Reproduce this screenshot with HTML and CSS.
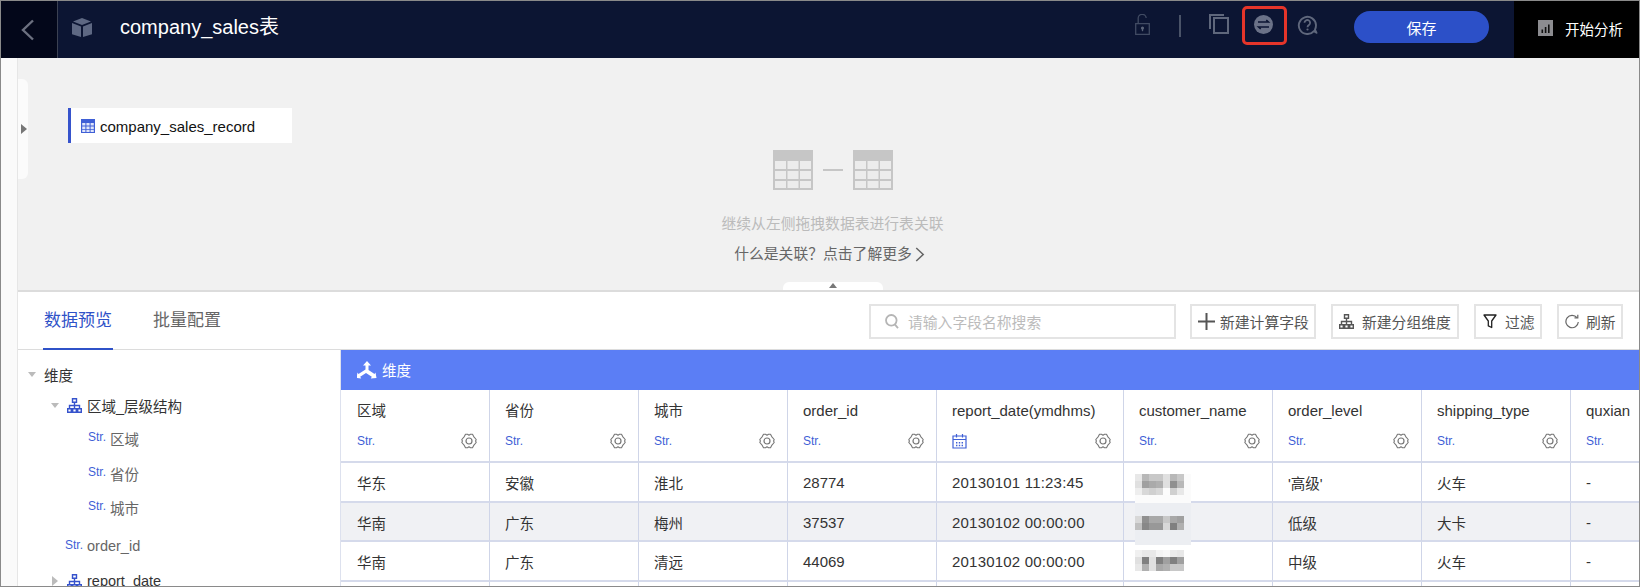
FILE: index.html
```html
<!DOCTYPE html>
<html lang="zh">
<head>
<meta charset="utf-8">
<title>company_sales表</title>
<link rel="stylesheet" href="styles.css">
</head>
<body>
<svg class="defs" aria-hidden="true">
  <symbol id="tree" viewBox="0 0 15 15">
    <path d="M5.500 .7h4v3.600h-4zM.7 10.700h3.600v3.600H.7zM5.700 10.700h3.600v3.600H5.700zM10.700 10.700h3.600v3.600h-3.600zM7.500 4.300v6.400M2.500 10.700V7.500h10v3.200" fill="none" stroke="currentColor" stroke-width="1.400"/>
  </symbol>
  <symbol id="gear" viewBox="0 0 16 16">
    <path d="M4.500 1.200h2L8 2.200l1.500-1h2l1.200 2.400 2.500 2.900-.6 1.500.6 1.500-2.500 2.900-1.200 2.400h-2l-1.500-1-1.500 1h-2l-1.200-2.400L.8 9.500 1.400 8 .8 6.500l2.500-2.900z" fill="none" stroke="#777" stroke-width="1.100" stroke-linejoin="round"/>
    <circle cx="8" cy="8" r="3" fill="none" stroke="#777" stroke-width="1.200"/>
  </symbol>
  <symbol id="minitable" viewBox="0 0 40 40">
    <path d="M0 0h40v40H0z" fill="#c6c6c6"/>
    <path d="M2 11h11v8H2zM14.500 11h11v8h-11zM27 11h11v8H27zM2 21h11v8H2zM14.500 21h11v8h-11zM27 21h11v8H27zM2 31h11v7H2zM14.500 31h11v7h-11zM27 31h11v7H27z" fill="#ececec"/>
  </symbol>
</svg>

<div class="app">
  <header class="topbar">
    <div class="back">
      <svg class="back-ico" viewBox="0 0 14 22"><path d="M12 1.500 2 11l10 9.500" fill="none" stroke="#6c7080" stroke-width="2.400"/></svg>
    </div>
    <svg class="cube" viewBox="0 0 20 19"><path d="M10 0l9 3.600L10 7 1 3.600zM0 5l9 3.500V19l-9-2.800zM20 5l-9 3.500V19l9-2.800z" fill="#5e6883"/></svg>
    <h1 class="title">company_sales表</h1>
    <div class="actions">
      <svg class="ico-lock" viewBox="0 0 15 21"><path d="M.7 9.700h13.600v10.600H.7zM3.200 9.500V4.700a4 4 0 0 1 8-.7" fill="none" stroke="#414b63" stroke-width="1.300"/><circle cx="7.500" cy="14" r="1.600" fill="#5a6378"/><path d="M7.500 14v3.200" stroke="#5a6378" stroke-width="1.300"/></svg>
      <span class="divider"></span>
      <svg class="ico-copy" viewBox="0 0 20 20"><path d="M5 4h14v15H5zM1 15V1h14" fill="none" stroke="#5f677c" stroke-width="2"/></svg>
      <span class="swap-wrap">
        <svg class="ico-swap" viewBox="0 0 19 19"><circle cx="9.500" cy="9.500" r="9.500" fill="#6b7288"/><path d="M4 7h10.500l-2.200-2M15 12H4.500l2.200 2" fill="none" stroke="#0c1533" stroke-width="1.500"/></svg>
        <span class="redbox"></span>
      </span>
      <svg class="ico-help" viewBox="0 0 21 20"><path d="M19.500 17.800l-2.600-1.700A8.600 8.600 0 1 1 19 10c0 2-.3 3.500-1 4.600z" fill="none" stroke="#5f677c" stroke-width="1.900" stroke-linejoin="round"/><path d="M7.500 7.800a2.800 2.800 0 1 1 4.400 2.300c-1 .7-1.400 1-1.400 2.100" fill="none" stroke="#5f677c" stroke-width="1.800"/><circle cx="10.500" cy="14.500" r="1.100" fill="#5f677c"/></svg>
      <button class="save">保存</button>
    </div>
    <div class="analyze">
      <svg class="ico-chart" viewBox="0 0 15 16"><path d="M0 0h15v16H0z" fill="#8c8c90"/><path d="M3.500 9.500h1.600V13H3.500zM6.800 7h1.600v6H6.800zM10 4.500h1.600V13H10z" fill="#111"/></svg>
      <span>开始分析</span>
    </div>
  </header>

  <div class="workspace">
    <aside class="strip"></aside>
    <main class="content">
      <section class="canvas">
        <div class="handle-left"><i class="tri-right"></i></div>
        <div class="table-card">
          <svg class="card-ico" viewBox="0 0 14 14"><path d="M0 0h14v14H0z" fill="#3f5fd6"/><path d="M1.200 4h3.200v2.600H1.200zM5.400 4h3.200v2.600H5.400zM9.600 4h3.200v2.600H9.600zM1.200 7.400h3.200V10H1.200zM5.400 7.400h3.200V10H5.400zM9.600 7.400h3.200V10H9.600zM1.200 10.800h3.200v2.200H1.200zM5.400 10.800h3.200v2.200H5.400zM9.600 10.800h3.200v2.200H9.600z" fill="#dfe5fa"/></svg>
          <span>company_sales_record</span>
        </div>
        <div class="hint">
          <div class="hint-icons">
            <svg class="mini"><use href="#minitable"/></svg>
            <span class="hint-dash"></span>
            <svg class="mini"><use href="#minitable"/></svg>
          </div>
          <p class="hint-text">继续从左侧拖拽数据表进行表关联</p>
          <p class="hint-link">什么是关联？点击了解更多<svg class="chev" viewBox="0 0 9 14"><path d="M1 1l6.500 6L1 13" fill="none" stroke="#666" stroke-width="1.400"/></svg></p>
        </div>
        <div class="handle-bottom"><i class="tri-up"></i></div>
      </section>

      <section class="panel">
        <div class="tabbar">
          <a class="tab active">数据预览</a>
          <a class="tab">批量配置</a>
          <div class="toolbar">
            <label class="search">
              <svg class="ico-search" viewBox="0 0 14 15"><circle cx="6.300" cy="6.300" r="5.300" fill="none" stroke="#b5b5b5" stroke-width="1.800"/><path d="M9.800 10.300l3.200 3.800" stroke="#b5b5b5" stroke-width="1.800"/></svg>
              <span>请输入字段名称搜索</span>
            </label>
            <button class="tbtn w1"><svg class="ico-plus" viewBox="0 0 17 17"><path d="M8.500 0v17M0 8.500h17" stroke="#555" stroke-width="2"/></svg>新建计算字段</button>
            <button class="tbtn w2"><svg class="ico-tree dark"><use href="#tree"/></svg>新建分组维度</button>
            <button class="tbtn w3"><svg class="ico-filter" viewBox="0 0 14 15"><path d="M1 1h12L8.700 7v6.500l-3.400-1.600V7z" fill="none" stroke="#222" stroke-width="1.300" stroke-linejoin="round"/></svg>过滤</button>
            <button class="tbtn w4"><svg class="ico-refresh" viewBox="0 0 14 16"><path d="M12 3.700A6.200 6.200 0 1 0 13.300 8" fill="none" stroke="#666" stroke-width="1.200"/><path d="M9.500 3.800h3.300V.7" fill="none" stroke="#666" stroke-width="1.200"/></svg>刷新</button>
          </div>
        </div>

        <div class="split">
          <nav class="tree">
            <div class="node l0"><i class="tri-down"></i><span class="strong">维度</span></div>
            <div class="node l1 n-hier"><i class="tri-down"></i><svg class="ico-tree"><use href="#tree"/></svg><span class="strong">区域_层级结构</span></div>
            <div class="node l2 n-first"><em class="str">Str.</em><span>区域</span></div>
            <div class="node l2 n-mid"><em class="str">Str.</em><span>省份</span></div>
            <div class="node l2"><em class="str">Str.</em><span>城市</span></div>
            <div class="node l3 n-order"><em class="str">Str.</em><span class="lat">order_id</span></div>
            <div class="node l1 n-date"><i class="tri-right small"></i><svg class="ico-tree"><use href="#tree"/></svg><span class="lat strong">report_date</span></div>
          </nav>

          <div class="data">
            <div class="groupbar">
              <svg class="ico-dim" viewBox="0 0 20 19"><path d="M10 1l4 4.500h-2.500V10l6 4 1-1.500 1 5.500-5.700.5 1-1.800-5.800-3.800-5.800 3.800 1 1.800L-.5 18l1-5.500 1 1.500 7-4.500V5.500H6z" fill="#fff"/></svg>
              <span>维度</span>
            </div>
            <div class="grid head">
              <div class="hc"><div class="ht">区域</div><div class="hm"><em class="str">Str.</em><svg class="gear"><use href="#gear"/></svg></div></div>
              <div class="hc"><div class="ht">省份</div><div class="hm"><em class="str">Str.</em><svg class="gear"><use href="#gear"/></svg></div></div>
              <div class="hc"><div class="ht">城市</div><div class="hm"><em class="str">Str.</em><svg class="gear"><use href="#gear"/></svg></div></div>
              <div class="hc"><div class="ht lat">order_id</div><div class="hm"><em class="str">Str.</em><svg class="gear"><use href="#gear"/></svg></div></div>
              <div class="hc"><div class="ht lat">report_date(ymdhms)</div><div class="hm"><svg class="ico-cal" viewBox="0 0 15 16"><path d="M1 3h13v12H1zM1 6.500h13M4.500 1v3.500M10.500 1v3.500" fill="none" stroke="#3f5fd6" stroke-width="1.200"/><path d="M4 9h1.400v1.400H4zM6.800 9h1.400v1.400H6.800zM9.600 9H11v1.400H9.600zM4 11.800h1.400v1.400H4zM6.800 11.800h1.400v1.400H6.800zM9.600 11.800H11v1.400H9.600z" fill="#3f5fd6"/></svg><svg class="gear"><use href="#gear"/></svg></div></div>
              <div class="hc"><div class="ht lat">customer_name</div><div class="hm"><em class="str">Str.</em><svg class="gear"><use href="#gear"/></svg></div></div>
              <div class="hc"><div class="ht lat">order_level</div><div class="hm"><em class="str">Str.</em><svg class="gear"><use href="#gear"/></svg></div></div>
              <div class="hc"><div class="ht lat">shipping_type</div><div class="hm"><em class="str">Str.</em><svg class="gear"><use href="#gear"/></svg></div></div>
              <div class="hc"><div class="ht lat">quxian</div><div class="hm"><em class="str">Str.</em></div></div>
            </div>
            <div class="grid row">
              <div class="c">华东</div><div class="c">安徽</div><div class="c">淮北</div><div class="c lat">28774</div><div class="c lat date">20130101 11:23:45</div>
              <div class="c">
                <svg class="mosaic m1" viewBox="0 0 56 29" shape-rendering="crispEdges"><path d="M0 0h56v29H0z" fill="#fbfbfb"/>
                  <rect x="0" y="0" width="7" height="7" fill="#e8e8e8"/><rect x="7" y="0" width="7" height="7" fill="#b8b8b8"/><rect x="14" y="0" width="7" height="7" fill="#c8c8c8"/><rect x="21" y="0" width="7" height="7" fill="#c8c8c8"/><rect x="28" y="0" width="7" height="7" fill="#e0e0e0"/><rect x="35" y="0" width="7" height="7" fill="#b8b8b8"/><rect x="42" y="0" width="7" height="7" fill="#c8c8c8"/>
                  <rect x="0" y="7" width="7" height="7" fill="#e0e0e0"/><rect x="7" y="7" width="7" height="7" fill="#a0a0a0"/><rect x="14" y="7" width="7" height="7" fill="#aaaaaa"/><rect x="21" y="7" width="7" height="7" fill="#b0b0b0"/><rect x="28" y="7" width="7" height="7" fill="#e0e0e0"/><rect x="35" y="7" width="7" height="7" fill="#909090"/><rect x="42" y="7" width="7" height="7" fill="#b8b8b8"/>
                  <rect x="0" y="14" width="7" height="7" fill="#eeeeee"/><rect x="7" y="14" width="7" height="7" fill="#d8d8d8"/><rect x="14" y="14" width="7" height="7" fill="#d0d0d0"/><rect x="21" y="14" width="7" height="7" fill="#d8d8d8"/><rect x="28" y="14" width="7" height="7" fill="#fcfcfc"/><rect x="35" y="14" width="7" height="7" fill="#d0d0d0"/><rect x="42" y="14" width="7" height="7" fill="#e8e8e8"/>
                </svg>
              </div>
              <div class="c">'高级'</div><div class="c">火车</div><div class="c lat">-</div>
            </div>
            <div class="grid row even">
              <div class="c">华南</div><div class="c">广东</div><div class="c">梅州</div><div class="c lat">37537</div><div class="c lat date">20130102 00:00:00</div>
              <div class="c">
                <svg class="mosaic m2" viewBox="0 0 56 42" shape-rendering="crispEdges"><path d="M0 0h56v42H0z" fill="#eceef2"/>
                  <rect x="0" y="13" width="7" height="7" fill="#d8d8d8"/><rect x="7" y="13" width="7" height="7" fill="#909090"/><rect x="14" y="13" width="7" height="7" fill="#a8a8a8"/><rect x="21" y="13" width="7" height="7" fill="#a8a8a8"/><rect x="28" y="13" width="7" height="7" fill="#c8c8c8"/><rect x="35" y="13" width="7" height="7" fill="#a8a8a8"/><rect x="42" y="13" width="7" height="7" fill="#a0a0a0"/>
                  <rect x="0" y="20" width="7" height="7" fill="#c0c0c0"/><rect x="7" y="20" width="7" height="7" fill="#888888"/><rect x="14" y="20" width="7" height="7" fill="#989898"/><rect x="21" y="20" width="7" height="7" fill="#989898"/><rect x="28" y="20" width="7" height="7" fill="#d8d8d8"/><rect x="35" y="20" width="7" height="7" fill="#808080"/><rect x="42" y="20" width="7" height="7" fill="#b0b0b0"/>
                </svg>
              </div>
              <div class="c">低级</div><div class="c">大卡</div><div class="c lat">-</div>
            </div>
            <div class="grid row">
              <div class="c">华南</div><div class="c">广东</div><div class="c">清远</div><div class="c lat">44069</div><div class="c lat date">20130102 00:00:00</div>
              <div class="c">
                <svg class="mosaic m3" viewBox="0 0 49 21" shape-rendering="crispEdges">
                  <rect x="0" y="0" width="7" height="7" fill="#f0f0f0"/><rect x="7" y="0" width="7" height="7" fill="#e8e8e8"/><rect x="14" y="0" width="7" height="7" fill="#e8e8e8"/><rect x="21" y="0" width="7" height="7" fill="#f4f4f4"/><rect x="28" y="0" width="7" height="7" fill="#f8f8f8"/><rect x="35" y="0" width="7" height="7" fill="#ececec"/><rect x="42" y="0" width="7" height="7" fill="#e8e8e8"/>
                  <rect x="0" y="7" width="7" height="7" fill="#e0e0e0"/><rect x="7" y="7" width="7" height="7" fill="#808080"/><rect x="14" y="7" width="7" height="7" fill="#e0e0e0"/><rect x="21" y="7" width="7" height="7" fill="#808080"/><rect x="28" y="7" width="7" height="7" fill="#a0a0a0"/><rect x="35" y="7" width="7" height="7" fill="#808080"/><rect x="42" y="7" width="7" height="7" fill="#a0a0a0"/>
                  <rect x="0" y="14" width="7" height="7" fill="#e8e8e8"/><rect x="7" y="14" width="7" height="7" fill="#b0b0b0"/><rect x="14" y="14" width="7" height="7" fill="#e0e0e0"/><rect x="21" y="14" width="7" height="7" fill="#a8a8a8"/><rect x="28" y="14" width="7" height="7" fill="#b0b0b0"/><rect x="35" y="14" width="7" height="7" fill="#c8c8c8"/><rect x="42" y="14" width="7" height="7" fill="#c8c8c8"/>
                </svg>
              </div>
              <div class="c">中级</div><div class="c">火车</div><div class="c lat">-</div>
            </div>
            <div class="grid row stub">
              <div class="c"></div><div class="c"></div><div class="c"></div><div class="c"></div><div class="c"></div><div class="c"></div><div class="c"></div><div class="c"></div><div class="c"></div>
            </div>
          </div>
        </div>
      </section>
    </main>
  </div>
</div>
</body>
</html>
```
FILE: styles.css
```css
* { box-sizing: border-box; }
html, body { margin: 0; padding: 0; }
body {
  width: 1640px;
  height: 587px;
  overflow: hidden;
  background: #fff;
  font-family: "Liberation Sans", "Noto Sans CJK SC", sans-serif;
  font-size: 14.5px;
  color: #333;
}
.defs { display: none; }
p, h1 { margin: 0; font-weight: 400; }
em { font-style: normal; }
button { font: inherit; cursor: pointer; }
svg { display: block; flex: none; }

.app {
  width: 1640px;
  height: 587px;
  display: flex;
  flex-direction: column;
  border: 1px solid #8a8a8a;
  overflow: hidden;
}

/* Top bar */
.topbar {
  height: 57px;
  flex: none;
  display: flex;
  align-items: center;
  background: #0c1533;
}
.back {
  width: 57px;
  height: 100%;
  flex: none;
  display: flex;
  align-items: center;
  padding-left: 20px;
  background: #03071a;
  border-right: 1px solid #3b4152;
}
.back-ico { width: 14px; height: 22px; }
.cube { width: 20px; height: 19px; margin-left: 14px; margin-top: -4px; }
.title { margin-left: 28px; font-size: 20px; color: #fff; line-height: 1; margin-top: -5px; }
.actions { margin-left: auto; display: flex; align-items: center; }
.ico-lock { width: 15px; height: 21px; margin-top: -10px; }
.divider { width: 2px; height: 22px; margin-left: 29px; margin-top: -8px; background: #4a5368; }
.ico-copy { width: 20px; height: 20px; margin-left: 28px; margin-top: -11px; }
.swap-wrap { position: relative; margin-left: 25px; margin-top: -11px; }
.ico-swap { width: 19px; height: 19px; }
.redbox {
  position: absolute;
  left: -12px;
  top: -9px;
  width: 45px;
  height: 39px;
  border: 3px solid #e5352a;
  border-radius: 5px;
}
.ico-help { width: 21px; height: 20px; margin-left: 24px; margin-top: -9px; }
.save {
  width: 135px;
  height: 32px;
  margin-left: 36px;
  margin-top: -5px;
  margin-right: 25px;
  border: 0;
  border-radius: 16px;
  background: #2c50c8;
  color: #fff;
  font-size: 15px;
}
.analyze {
  width: 125px;
  height: 100%;
  flex: none;
  display: flex;
  align-items: center;
  padding-left: 24px;
  background: #000;
  color: #fff;
  font-size: 14.5px;
}
.ico-chart { width: 15px; height: 16px; margin-right: 12px; margin-top: -3px; }
.analyze span { margin-top: -3px; }

/* Workspace */
.workspace { flex: 1; min-height: 0; display: flex; }
.strip { width: 17px; flex: none; background: #fafafa; border-right: 1px solid #e6e6e6; }
.content { flex: 1; min-width: 0; display: flex; flex-direction: column; }

/* Canvas */
.canvas {
  position: relative;
  height: 234px;
  flex: none;
  background: #f1f1f1;
  border-bottom: 2px solid #dcdcdc;
}
.handle-left {
  position: absolute;
  left: 0;
  top: 21px;
  width: 10px;
  height: 100px;
  display: flex;
  align-items: center;
  background: #fbfbfb;
  border-radius: 0 6px 6px 0;
}
.tri-right {
  display: block;
  border-left: 6px solid #777;
  border-top: 5px solid transparent;
  border-bottom: 5px solid transparent;
  margin-left: 3px;
}
.tri-right.small { border-left-color: #bbb; margin: 0; }
.table-card {
  position: absolute;
  left: 50px;
  top: 50px;
  width: 224px;
  height: 35px;
  display: flex;
  align-items: center;
  gap: 5px;
  padding-left: 10px;
  background: #fff;
  border-left: 3px solid #3653cc;
  color: #111;
  font-size: 15px;
}
.table-card span { margin-top: 2px; }
.card-ico { width: 14px; height: 14px; }
.hint {
  height: 232px;
  display: flex;
  flex-direction: column;
  align-items: center;
  padding-top: 92px;
  padding-left: 8px;
}
.hint-icons { display: flex; align-items: center; gap: 10px; }
.mini { width: 40px; height: 40px; }
.hint-dash { width: 20px; height: 2px; background: #c6c6c6; }
.hint-text { margin-top: 25px; color: #bbb; font-size: 14.8px; line-height: 18px; }
.hint-link { margin-top: 12px; margin-right: 6px; color: #666; font-size: 14.8px; line-height: 18px; display: flex; align-items: center; gap: 3px; }
.chev { width: 10px; height: 15px; }
.handle-bottom {
  position: absolute;
  left: 765px;
  top: 224px;
  width: 100px;
  height: 8px;
  display: flex;
  justify-content: center;
  background: #fff;
  border-radius: 6px 6px 0 0;
}
.tri-up {
  display: block;
  height: 0;
  margin-top: 1px;
  border-bottom: 5px solid #777;
  border-left: 4.500px solid transparent;
  border-right: 4.500px solid transparent;
}

/* Panel */
.panel { flex: 1; min-height: 0; display: flex; flex-direction: column; background: #fff; }
.tabbar {
  height: 58px;
  flex: none;
  display: flex;
  border-bottom: 1px solid #dcdcdc;
  padding-left: 25px;
  padding-right: 16px;
}
.tab {
  display: flex;
  align-items: center;
  height: 58px;
  padding: 0 1px 4px;
  margin-right: 39px;
  font-size: 17px;
  color: #666;
  border-bottom: 2px solid transparent;
}
.tab.active { color: #2f52c8; border-bottom-color: #2f52c8; }
.toolbar { margin-left: auto; display: flex; align-items: flex-start; gap: 15px; padding-top: 12px; }
.search {
  width: 307px;
  height: 35px;
  display: flex;
  align-items: center;
  gap: 9px;
  padding-left: 14px;
  border: 2px solid #e4e4e4;
  color: #bbb;
  font-size: 14.8px;
  margin-right: -1px;
}
.ico-search { width: 14px; height: 15px; }
.tbtn {
  height: 35px;
  display: flex;
  align-items: center;
  padding: 0;
  background: #fff;
  border: 2px solid #e4e4e4;
  color: #555;
  font-size: 14.8px;
  white-space: nowrap;
}
.w1 { width: 126px; gap: 5px; padding-left: 6px; }
.w2 { width: 128px; gap: 3px; padding-left: 6px; }
.w3 { width: 68px; gap: 8px; padding-left: 7px; }
.w4 { width: 66px; gap: 7px; padding-left: 6px; }
.ico-plus { width: 17px; height: 17px; }
.ico-filter { width: 14px; height: 15px; }
.ico-refresh { width: 14px; height: 16px; }

/* Split */
.split { flex: 1; min-height: 0; display: flex; }
.tree {
  width: 323px;
  flex: none;
  padding-top: 14px;
  border-right: 1px solid #dde1ee;
  display: flex;
  flex-direction: column;
  gap: 14px;
}
.node { height: 20px; flex: none; display: flex; align-items: center; color: #666; font-size: 14.5px; }
.node .strong { color: #333; }
.l0 { padding-left: 10px; }
.l1 { padding-left: 33px; }
.l2 { padding-left: 70px; }
.l3 { padding-left: 47px; }
.n-hier { margin-top: -3px; }
.n-first { margin-top: -1px; }
.n-mid { margin-top: 1px; }
.n-order { margin-top: 5px; }
.n-date { margin-top: 1px; }
.tri-down {
  display: block;
  width: 0;
  height: 0;
  margin-right: 8px;
  border-top: 5px solid #bbb;
  border-left: 4px solid transparent;
  border-right: 4px solid transparent;
}
.n-date .tri-right { margin-left: 1px; margin-right: 9px; }
.ico-tree { width: 15px; height: 15px; margin-right: 5px; color: #3653cc; }
.ico-tree.dark { color: #555; margin-right: 5px; }
.str { font-family: "Liberation Sans Narrow", "Liberation Sans", sans-serif; font-size: 12px; color: #3f5fd6; width: 22px; flex: none; margin-top: -2px; }
.lat { font-size: 15px; }
.l3 .lat, .n-date .lat { font-size: 14.500px; }

/* Data */
.data { flex: 1; min-width: 0; overflow: hidden; }
.groupbar {
  height: 40px;
  display: flex;
  align-items: center;
  gap: 5px;
  padding: 0 0 2px 16px;
  background: #5b7ef5;
  color: #fff;
  font-size: 14.500px;
}
.ico-dim { width: 20px; height: 19px; }
.grid {
  display: grid;
  grid-template-columns: 149px 149px 149px 149px 187px 149px 149px 149px 69px;
}
.head { height: 73px; }
.hc {
  padding: 11px 12px 0 15px;
  border-right: 1px solid #cfd5e8;
  border-bottom: 2px solid #d5daeb;
}
.hc:first-child, .c:first-child { padding-left: 16px; }
.ht { height: 20px; line-height: 20px; font-size: 14.500px; color: #333; white-space: nowrap; }
.ht.lat { font-size: 15px; }
.hm { margin-top: 12px; height: 16px; display: flex; justify-content: space-between; align-items: center; }
.hc .str { width: auto; margin-top: 0; }
.gear { width: 16px; height: 16px; }
.ico-cal { width: 15px; height: 16px; }
.row { height: 39.500px; }
.row.even { background: #f0f1f4; }
.stub { height: 10px; }
.c {
  position: relative;
  display: flex;
  align-items: center;
  padding: 2px 0 0 15px;
  border-right: 1px solid #cfd5e8;
  border-bottom: 2px solid #d5daeb;
  font-size: 14.500px;
  color: #333;
}
.c.lat { font-size: 15px; }
.c.date { letter-spacing: .2px; }
.mosaic { position: absolute; left: 11px; }
.m1 { top: 11px; width: 56px; height: 29px; }
.m2 { top: 0; width: 56px; height: 42px; }
.m3 { top: 8px; width: 49px; height: 21px; }
```
